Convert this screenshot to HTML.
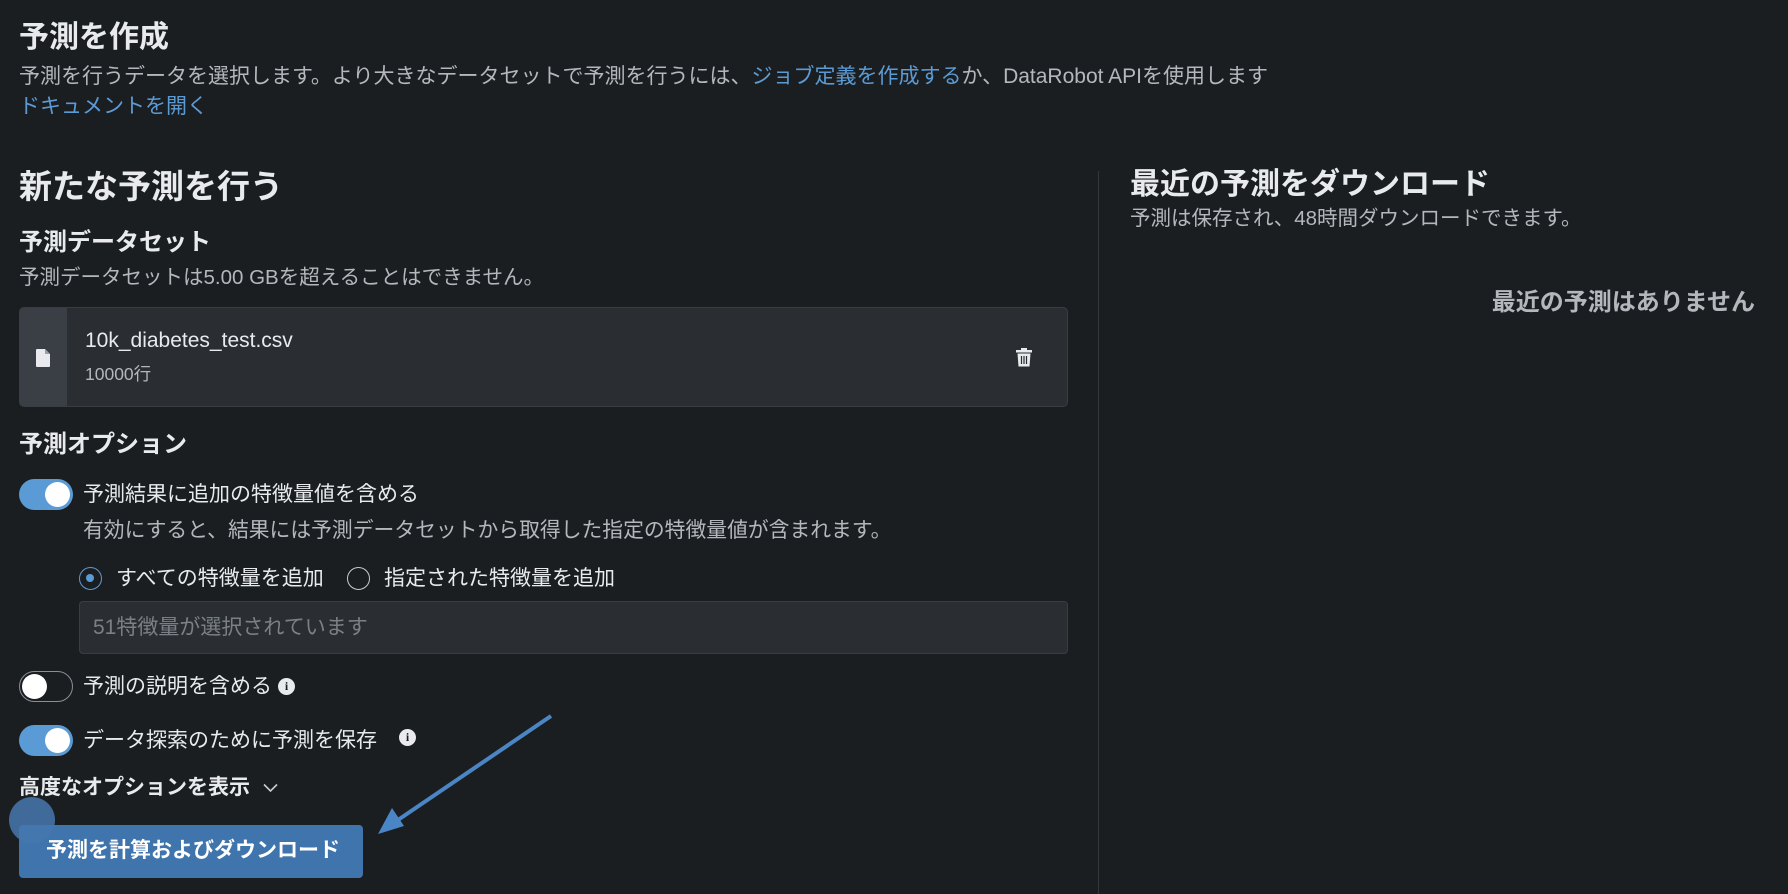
<!DOCTYPE html>
<html><head><meta charset="utf-8"><style>
*{box-sizing:border-box;margin:0;padding:0}
body{width:1788px;height:894px;background:#1b1e21;font-family:"Liberation Sans","Noto Sans CJK JP",sans-serif;color:#e8eaed;position:relative;overflow:hidden}
.a{position:absolute;white-space:nowrap;line-height:1}
.g{color:#b4b8bd}
.l{color:#5b9bd5}
.tg{position:absolute;width:54px;height:31px;border-radius:16px;left:19px}
.tg.on{background:#5b9bd5}
.tg.off{background:#1b1e21;border:1.5px solid #8a8f96}
.tg i{position:absolute;top:3px;width:25px;height:25px;border-radius:50%;background:#fff}
.tg.on i{right:3px}.tg.off i{left:2px;top:2px}
.info{position:absolute;width:17px;height:17px;border-radius:50%;background:#e8eaed;color:#1b1e21;font:bold 12px "Liberation Serif",serif;text-align:center;line-height:17px}
</style></head><body>
<div class="a" style="left:19px;top:23px;font-size:30px;font-weight:bold">予測を作成</div>
<div class="a g" style="left:19px;top:66px;font-size:21px">予測を行うデータを選択します。より大きなデータセットで予測を行うには、<span class="l">ジョブ定義を作成する</span>か、DataRobot APIを使用します</div>
<div class="a l" style="left:19px;top:96px;font-size:21px">ドキュメントを開く</div>

<div class="a" style="left:19px;top:170px;font-size:33px;font-weight:bold">新たな予測を行う</div>
<div class="a" style="left:19px;top:231px;font-size:24px;font-weight:bold">予測データセット</div>
<div class="a g" style="left:19px;top:268px;font-size:20.5px">予測データセットは5.00 GBを超えることはできません。</div>

<div style="position:absolute;left:19px;top:307px;width:1049px;height:100px;background:#2a2e33;border:1px solid #3a3e44;border-radius:5px;overflow:hidden">
<div style="position:absolute;left:0;top:0;width:47px;height:100%;background:#3a3f46"></div>
<svg style="position:absolute;left:16px;top:41px" width="14" height="18" viewBox="0 0 14 18"><path d="M1 0h8l5 5v12a1 1 0 0 1-1 1H1a1 1 0 0 1-1-1V1a1 1 0 0 1 1-1z" fill="#e8eaed"/><path d="M9 0v5h5" fill="#9aa0a6"/></svg>
<div class="a" style="left:65px;top:22px;font-size:21px">10k_diabetes_test.csv</div>
<div class="a g" style="left:65px;top:58px;font-size:17.5px">10000行</div>
<svg style="position:absolute;left:996px;top:40px" width="16" height="19" viewBox="0 0 16 19"><rect x="0" y="2" width="16" height="2.5" fill="#e8eaed"/><rect x="5" y="0" width="6" height="3" fill="#e8eaed"/><path d="M1.5 5.5h13l-1 13h-11z" fill="#e8eaed"/><path d="M5.5 8v8M8 8v8M10.5 8v8" stroke="#2a2e33" stroke-width="1.2"/></svg>
</div>

<div class="a" style="left:19px;top:433px;font-size:24px;font-weight:bold">予測オプション</div>
<div class="tg on" style="top:479px"><i></i></div>
<div class="a" style="left:83px;top:484px;font-size:21px">予測結果に追加の特徴量値を含める</div>
<div class="a g" style="left:83px;top:521px;font-size:20.8px">有効にすると、結果には予測データセットから取得した指定の特徴量値が含まれます。</div>
<div style="position:absolute;left:79px;top:567px;width:23px;height:23px;border-radius:50%;border:1.5px solid #5b9bd5"><div style="position:absolute;left:6px;top:6px;width:8px;height:8px;border-radius:50%;background:#5b9bd5"></div></div>
<div class="a" style="left:116px;top:568px;font-size:21px">すべての特徴量を追加</div>
<div style="position:absolute;left:347px;top:567px;width:23px;height:23px;border-radius:50%;border:1.5px solid #c8ccd0"></div>
<div class="a" style="left:384px;top:568px;font-size:21px">指定された特徴量を追加</div>
<div style="position:absolute;left:79px;top:601px;width:989px;height:53px;background:#2a2e33;border:1px solid #3a3e44;border-radius:4px"></div>
<div class="a" style="left:93px;top:617px;font-size:21px;color:#7b8087">51特徴量が選択されています</div>

<div class="tg off" style="top:671px"><i></i></div>
<div class="a" style="left:83px;top:676px;font-size:21px">予測の説明を含める</div>
<div class="info" style="left:278px;top:678px">i</div>
<div class="tg on" style="top:725px"><i></i></div>
<div class="a" style="left:83px;top:730px;font-size:21px">データ探索のために予測を保存</div>
<div class="info" style="left:399px;top:729px">i</div>

<div class="a" style="left:19px;top:777px;font-size:21px;font-weight:bold">高度なオプションを表示</div>
<svg style="position:absolute;left:263px;top:783px" width="15" height="10" viewBox="0 0 15 10"><path d="M1 1.5l6.5 6.5 6.5-6.5" stroke="#c8ccd0" stroke-width="1.6" fill="none"/></svg>

<div style="position:absolute;left:19px;top:825px;width:344px;height:53px;background:#3f74ad;border-radius:4px"></div>
<div class="a" style="left:46px;top:840px;font-size:21px;font-weight:bold;color:#fff">予測を計算およびダウンロード</div>
<div style="position:absolute;left:9px;top:797px;width:46px;height:46px;border-radius:50%;background:rgba(70,120,175,0.85)"></div>
<svg style="position:absolute;left:0;top:0" width="1788" height="894"><line x1="551" y1="716" x2="395" y2="822" stroke="#4a86c5" stroke-width="4"/><path d="M378 834l14-26 12 18z" fill="#4a86c5"/></svg>

<div style="position:absolute;left:1098px;top:171px;width:1px;height:723px;background:#33373c"></div>
<div class="a" style="left:1130px;top:170px;font-size:30px;font-weight:bold">最近の予測をダウンロード</div>
<div class="a g" style="left:1130px;top:209px;font-size:20.5px">予測は保存され、48時間ダウンロードできます。</div>
<div class="a" style="right:33px;top:291px;font-size:24px;font-weight:bold;color:#b4b8bd">最近の予測はありません</div>
</body></html>
